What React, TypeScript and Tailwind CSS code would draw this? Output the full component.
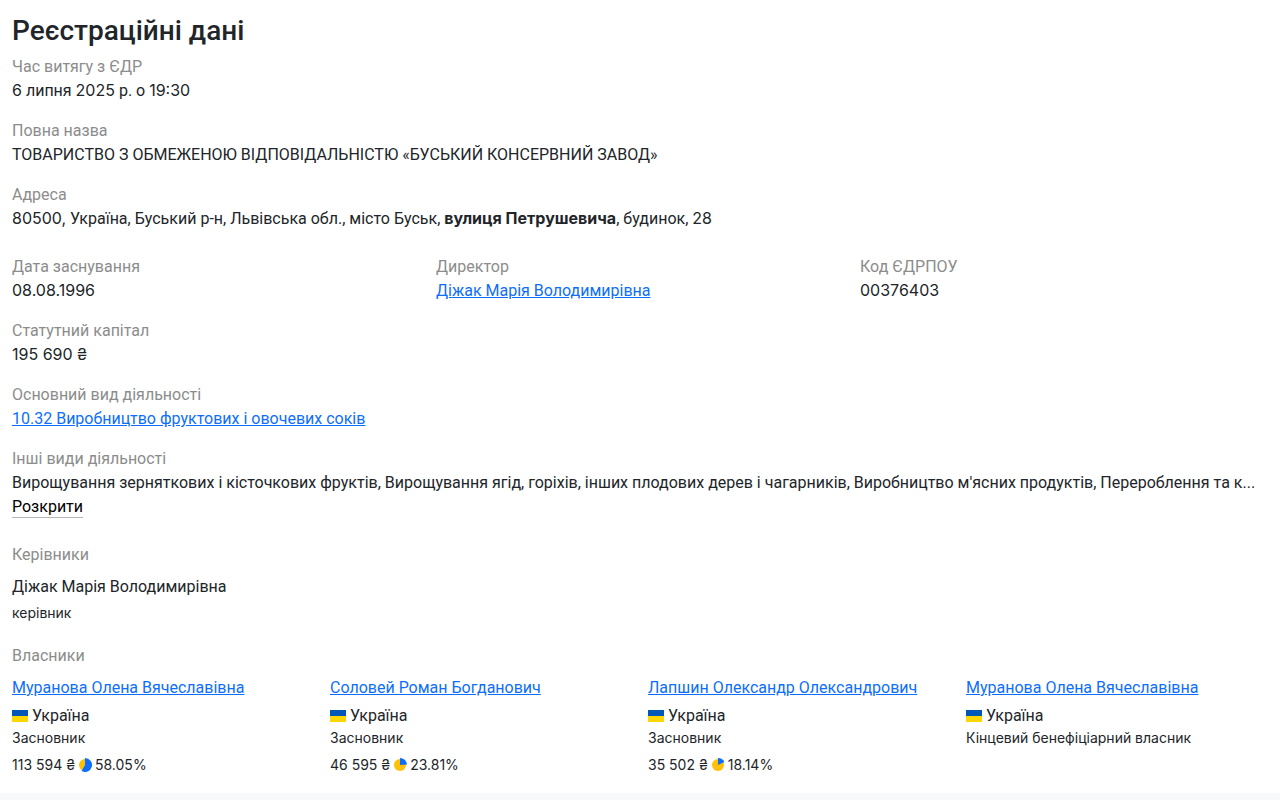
import type { ReactNode } from "react";

interface FieldProps {
  label: string;
  children: ReactNode;
}

interface Owner {
  name: string;
  role: string;
  amount?: string;
  percent?: number;
}

const owners: Owner[] = [
  { name: "Муранова Олена Вячеславівна", role: "Засновник", amount: "113 594 ₴", percent: 58.05 },
  { name: "Соловей Роман Богданович", role: "Засновник", amount: "46 595 ₴", percent: 23.81 },
  { name: "Лапшин Олександр Олександрович", role: "Засновник", amount: "35 502 ₴", percent: 18.14 },
  { name: "Муранова Олена Вячеславівна", role: "Кінцевий бенефіціарний власник" },
];

const activities =
  "Вирощування зерняткових і кісточкових фруктів, Вирощування ягід, горіхів, інших плодових дерев і чагарників, Виробництво м'ясних продуктів, Перероблення та к...";

const linkClass = "text-[#0d6efd] underline";

// small print and figures are set in Inter, running text in Roboto
const smallClass = "font-['Inter',sans-serif] text-sm leading-5";

function Num({ children }: { children: ReactNode }) {
  return <span className="font-['Inter',sans-serif] leading-none">{children}</span>;
}

function Field({ label, children }: FieldProps) {
  return (
    <div className="mb-4">
      <dt className="text-[#8c8c8c]">{label}</dt>
      <dd>{children}</dd>
    </div>
  );
}

function Flag() {
  return (
    <svg className="mr-1 h-3 w-4" viewBox="0 0 16 12" aria-hidden="true">
      <path fill="#0057b8" d="M0 0h16v6H0z" />
      <path fill="#ffd700" d="M0 6h16v6H0z" />
    </svg>
  );
}

function SharePie({ percent }: { percent: number }) {
  const angle = (percent / 100) * 2 * Math.PI;
  const x = 6 + 7 * Math.sin(angle);
  const y = 7 - 7 * Math.cos(angle);
  const large = percent > 50 ? 1 : 0;
  return (
    <svg className="mr-[3px] ml-1 h-3.5 w-[13px]" viewBox="0 0 13 14" aria-hidden="true">
      <circle cx="6" cy="7" r="6" fill="#ffc107" />
      <path fill="#0d6efd" d={`M6 7V0A7 7 0 ${large} 1 ${x} ${y}Z`} />
    </svg>
  );
}

function OwnerCard({ owner }: { owner: Owner }) {
  return (
    <li>
      <a href="#" className={linkClass}>
        {owner.name}
      </a>
      <div className="mt-1 flex items-center">
        <Flag />
        Україна
      </div>
      <div className={smallClass}>{owner.role}</div>
      {owner.percent !== undefined && (
        <div className={`mt-[7px] flex items-center ${smallClass}`}>
          {owner.amount}
          <SharePie percent={owner.percent} />
          {owner.percent}%
        </div>
      )}
    </li>
  );
}

export default function App() {
  return (
    <div className="min-h-screen bg-[#f8f9fa] font-['Roboto','Liberation_Sans',sans-serif] text-base text-[#212529]">
      <main className="bg-white pt-3 pr-2 pb-[18px] pl-3">
        <h1 className="mb-[5px] text-[28px] leading-[38px] font-medium">Реєстраційні дані</h1>
        <dl>
          <Field label="Час витягу з ЄДР">
            <Num>6</Num> липня <Num>2025</Num> р. о <Num>19:30</Num>
          </Field>
          <Field label="Повна назва">ТОВАРИСТВО З ОБМЕЖЕНОЮ ВІДПОВІДАЛЬНІСТЮ «БУСЬКИЙ КОНСЕРВНИЙ ЗАВОД»</Field>
          <Field label="Адреса">
            <Num>80500,</Num> Україна, Буський р-н, Львівська обл., місто Буськ,{" "}
            <strong className="font-['Inter',sans-serif] leading-none">вулиця Петрушевича</strong>, будинок,{" "}
            <Num>28</Num>
          </Field>
        </dl>
        <dl className="mt-6 grid grid-cols-3 gap-x-3">
          <Field label="Дата заснування">
            <Num>08.08.1996</Num>
          </Field>
          <Field label="Директор">
            <a href="#" className={linkClass}>
              Діжак Марія Володимирівна
            </a>
          </Field>
          <Field label="Код ЄДРПОУ">
            <Num>00376403</Num>
          </Field>
        </dl>
        <dl>
          <Field label="Статутний капітал">
            <Num>195 690 ₴</Num>
          </Field>
          <Field label="Основний вид діяльності">
            <a href="#" className={linkClass}>
              10.32 Виробництво фруктових і овочевих соків
            </a>
          </Field>
        </dl>
        <section className="pb-px">
          <h2 className="text-[#8c8c8c]">Інші види діяльності</h2>
          <p className="truncate">{activities}</p>
          <button type="button" className="mt-0.5 block border-b border-[#b5b5b5] leading-5 text-black">
            Розкрити
          </button>
        </section>
        <section className="mt-6">
          <h2 className="mb-2 text-[#8c8c8c]">Керівники</h2>
          <p>Діжак Марія Володимирівна</p>
          <p className={`mt-1 ${smallClass}`}>керівник</p>
        </section>
        <section className="mt-[21px]">
          <h2 className="mb-2 text-[#8c8c8c]">Власники</h2>
          <ul className="grid grid-cols-4 gap-x-3">
            {owners.map((owner, index) => (
              <OwnerCard key={index} owner={owner} />
            ))}
          </ul>
        </section>
      </main>
    </div>
  );
}
